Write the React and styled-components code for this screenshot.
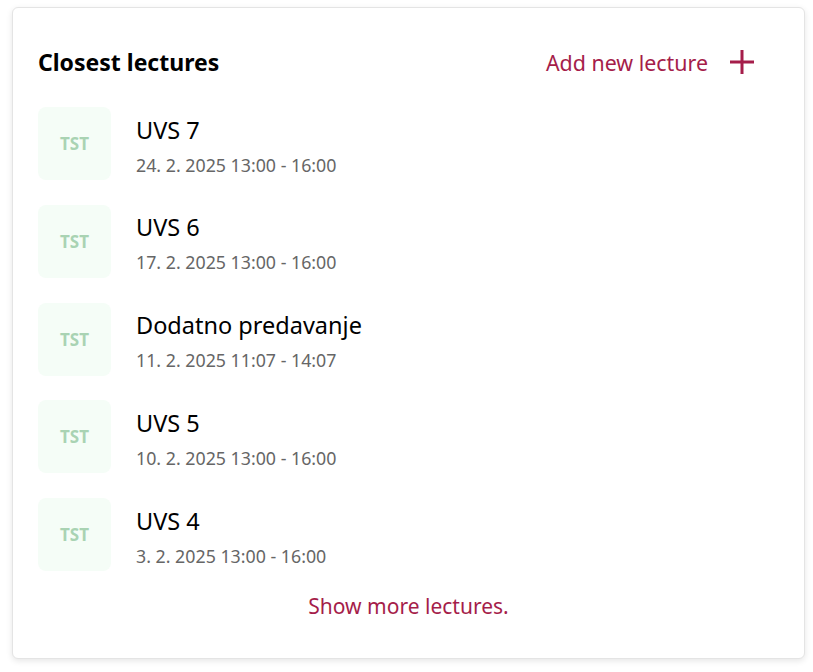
import React from 'react'
import styled, { createGlobalStyle } from 'styled-components'

const GlobalStyle = createGlobalStyle`
  html, body {
    margin: 0;
    padding: 0;
    background: #ffffff;
  }
  body {
    font-family: "Noto Sans", "Open Sans", sans-serif;
  }
`

const lectures = [
  { title: 'UVS 7', date: '24. 2. 2025 13:00 - 16:00' },
  { title: 'UVS 6', date: '17. 2. 2025 13:00 - 16:00' },
  { title: 'Dodatno predavanje', date: '11. 2. 2025 11:07 - 14:07' },
  { title: 'UVS 5', date: '10. 2. 2025 13:00 - 16:00' },
  { title: 'UVS 4', date: '3. 2. 2025 13:00 - 16:00' },
]

export default function App() {
  return (
    <>
      <GlobalStyle />
      <Page>
        <Card>
          <Header>
            <Title>Closest lectures</Title>
            <AddButton>
              Add new lecture
              <svg width="26" height="26" viewBox="0 0 26 26">
                <path d="M13 1v24M1 13h24" stroke="currentColor" strokeWidth="3" fill="none" />
              </svg>
            </AddButton>
          </Header>
          <List>
            {lectures.map((l) => (
              <Item key={l.title}>
                <Badge>TST</Badge>
                <Info>
                  <LectureTitle>{l.title}</LectureTitle>
                  <LectureDate>{l.date}</LectureDate>
                </Info>
              </Item>
            ))}
          </List>
          <Footer>
            <MoreLink>Show more lectures.</MoreLink>
          </Footer>
        </Card>
      </Page>
    </>
  )
}

const Page = styled.div`
  padding: 7px 8px 14px 12px;
`

const Card = styled.div`
  background: #fff;
  border: 1px solid #e4e4e4;
  border-radius: 6px;
  box-shadow: 0 2px 6px rgba(0, 0, 0, 0.1);
  padding: 0 25px;
  height: 652px;
  box-sizing: border-box;
`

const Header = styled.div`
  display: flex;
  align-items: center;
  justify-content: space-between;
  padding: 38px 24px 0 0;
  height: 70px;
  box-sizing: border-box;
`

const Title = styled.h2`
  margin: 0;
  font-size: 23px;
  font-weight: 700;
  color: #000;
`

const AddButton = styled.button`
  display: flex;
  align-items: center;
  gap: 21px;
  background: none;
  border: none;
  padding: 0;
  font-family: inherit;
  font-size: 21.4px;
  color: #a51d4a;
  cursor: pointer;
`

const List = styled.div`
  display: flex;
  flex-direction: column;
  gap: 24.75px;
  margin-top: 29px;
`

const Item = styled.div`
  display: flex;
  align-items: center;
  gap: 25px;
`

const Badge = styled.div`
  width: 73px;
  height: 73px;
  border-radius: 8px;
  background: #f5fdf7;
  color: #a9d3b3;
  font-weight: 700;
  font-size: 17px;
  display: flex;
  align-items: center;
  justify-content: center;
  flex-shrink: 0;
`

const Info = styled.div`
  display: flex;
  flex-direction: column;
  gap: 8px;
  padding-top: 4px;
`

const LectureTitle = styled.div`
  font-size: 23.5px;
  color: #000;
  line-height: 30px;
`

const LectureDate = styled.div`
  font-size: 17.8px;
  color: #666;
  line-height: 24px;
`

const Footer = styled.div`
  display: flex;
  justify-content: center;
  margin-top: 21px;
`

const MoreLink = styled.a`
  font-size: 21px;
  color: #a51d4a;
  cursor: pointer;
`
